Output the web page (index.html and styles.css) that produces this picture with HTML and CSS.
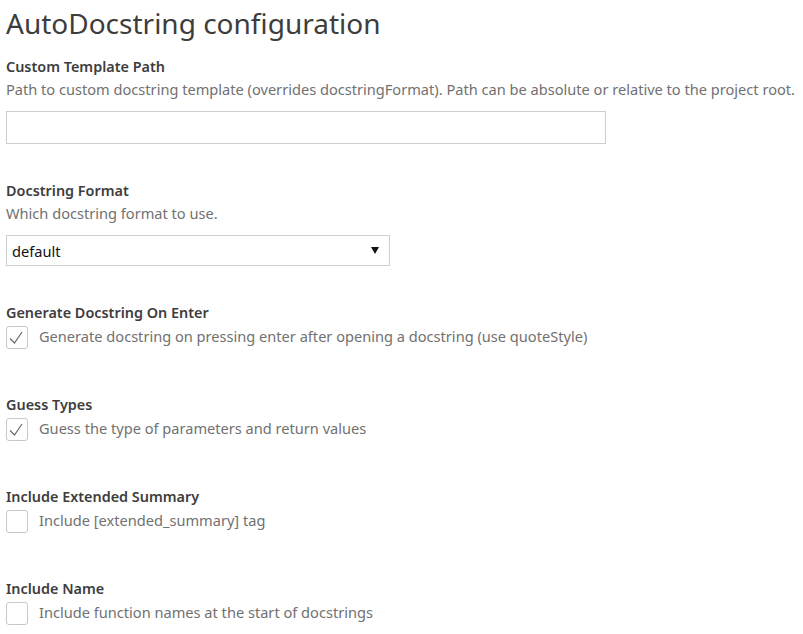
FILE: index.html
```html
<!DOCTYPE html>
<html lang="en">
  <head>
    <meta charset="UTF-8" />
    <title>AutoDocstring configuration</title>
    <link rel="stylesheet" href="styles.css">
  </head>
  <body>
    <h1>AutoDocstring configuration</h1>

    <div class="setting">
      <div class="setting-label">Custom Template Path</div>
      <div class="setting-desc">
        Path to custom docstring template (overrides docstringFormat). Path can be absolute or relative to the project root.
      </div>
      <input class="text-input" type="text" />
    </div>

    <div class="setting">
      <div class="setting-label">Docstring Format</div>
      <div class="setting-desc">Which docstring format to use.</div>
      <div class="select">
        <span>default</span>
        <svg class="select-arrow" width="8" height="7" viewBox="0 0 8 7">
          <path d="M0 0 H8 L4 7 Z" fill="#111" />
        </svg>
      </div>
    </div>

    <div class="setting check-setting">
      <div class="setting-label">Generate Docstring On Enter</div>
      <label class="check-row">
        <span class="checkbox">
          <svg width="22" height="22" viewBox="0 0 22 22">
            <path d="M4 12.5 L8.5 17 L16 6" fill="none" stroke="#6a6a6a" stroke-width="1.2" />
          </svg>
        </span>
        Generate docstring on pressing enter after opening a docstring (use quoteStyle)
      </label>
    </div>

    <div class="setting check-setting">
      <div class="setting-label">Guess Types</div>
      <label class="check-row">
        <span class="checkbox">
          <svg width="22" height="22" viewBox="0 0 22 22">
            <path d="M4 12.5 L8.5 17 L16 6" fill="none" stroke="#6a6a6a" stroke-width="1.2" />
          </svg>
        </span>
        Guess the type of parameters and return values
      </label>
    </div>

    <div class="setting check-setting">
      <div class="setting-label">Include Extended Summary</div>
      <label class="check-row">
        <span class="checkbox"></span>
        Include [extended_summary] tag
      </label>
    </div>

    <div class="setting check-setting">
      <div class="setting-label">Include Name</div>
      <label class="check-row">
        <span class="checkbox"></span>
        Include function names at the start of docstrings
      </label>
    </div>
  </body>
</html>
```
FILE: styles.css
```css
* {
  box-sizing: border-box;
}

body {
  margin: 0;
  padding: 0 6px;
  background-color: #ffffff;
  color: #444444;
  font-family: "Noto Sans", "Open Sans", sans-serif;
  overflow: hidden;
}

h1 {
  margin: 4px 0 13px;
  font-size: 28px;
  font-weight: 400;
  line-height: 38px;
  color: #3d3d3d;
}

.setting {
  margin-bottom: 35px;
}

.check-setting {
  margin-bottom: 44px;
}

.check-setting:last-child {
  margin-bottom: 0;
}

.setting-label {
  font-size: 14.4px;
  font-weight: 600;
  line-height: 23px;
  color: #3d3d3d;
}

.setting-desc {
  font-size: 14.6px;
  line-height: 23px;
  color: #717171;
  white-space: nowrap;
}

.text-input {
  display: block;
  width: 600px;
  height: 33px;
  margin-top: 10px;
  border: 1px solid #cecece;
  background: #ffffff;
  outline: none;
}

.select {
  display: flex;
  align-items: center;
  justify-content: space-between;
  width: 384px;
  height: 31px;
  margin-top: 10px;
  padding: 0 10px 0 5px;
  border: 1px solid #cecece;
  font-size: 14.6px;
  color: #111111;
}

.select-arrow {
  display: block;
}

.check-row {
  display: flex;
  align-items: flex-start;
  gap: 11px;
  font-size: 14.6px;
  line-height: 25px;
  color: #717171;
  white-space: nowrap;
}

.checkbox {
  display: block;
  width: 22px;
  height: 23px;
  margin-top: 2px;
  border: 1px solid #c8c8c8;
  border-radius: 3px;
  flex-shrink: 0;
}

.checkbox svg {
  display: block;
  margin: -1px;
}
```
